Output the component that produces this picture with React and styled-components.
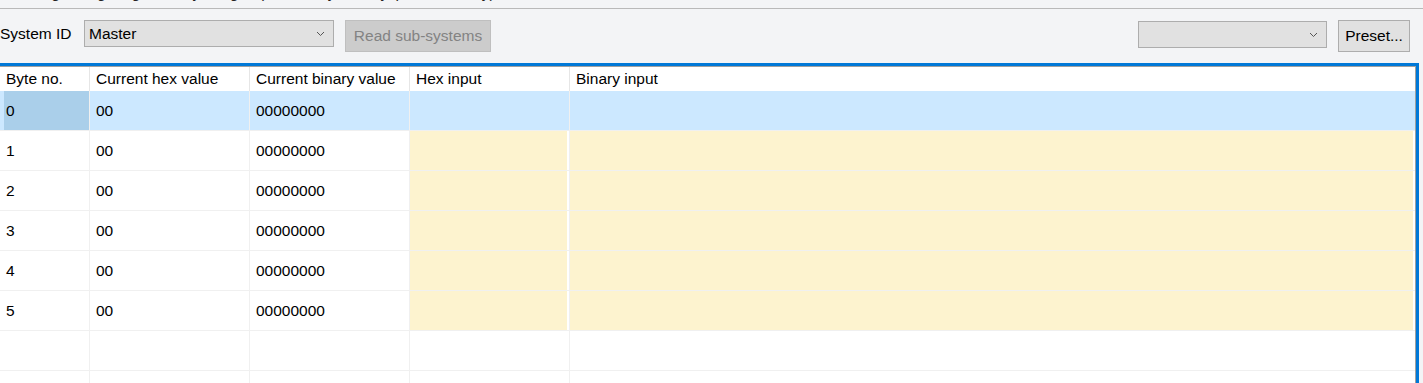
import React from "react";
import styled, { createGlobalStyle } from "styled-components";

const Global = createGlobalStyle`
  html, body { margin: 0; padding: 0; height: 383px; overflow: hidden; }
  body {
    background: #f3f4f6;
    font-family: "Liberation Sans", Arial, sans-serif;
    font-size: 15.5px;
    color: #000;
  }
`;

const Page = styled.div`
  display: flex;
  flex-direction: column;
  height: 383px;
`;

const TitleClip = styled.div`
  height: 8px;
  overflow: hidden;
  border-bottom: 1px solid #b9b9b9;
  padding-left: 12px;
`;

const TitleText = styled.div`
  margin-top: -16px;
  line-height: 17px;
  white-space: nowrap;
  color: #222;
`;

const Toolbar = styled.div`
  display: flex;
  align-items: flex-start;
  height: 54px;
  box-sizing: border-box;
  padding: 11px 13px 0 0;
`;

const Label = styled.span`
  width: 84px;
  line-height: 27px;
  white-space: nowrap;
`;

const SelectBox = styled.div`
  box-sizing: border-box;
  width: ${(p) => p.$w}px;
  height: 27px;
  margin-top: ${(p) => p.$top || 0}px;
  background: #e1e1e1;
  border: 1px solid #adadad;
  display: flex;
  align-items: center;
  padding: 0 8px 0 4px;
  line-height: 25px;
`;

const SelectValue = styled.span`
  flex: 1;
`;

const Button = styled.div`
  box-sizing: border-box;
  width: ${(p) => p.$w}px;
  height: 32px;
  margin-left: 11px;
  display: flex;
  align-items: center;
  justify-content: center;
  background: ${(p) => (p.$disabled ? "#cccccc" : "#e1e1e1")};
  border: 1px solid ${(p) => (p.$disabled ? "#bfbfbf" : "#adadad")};
  color: ${(p) => (p.$disabled ? "#838383" : "#000")};
  white-space: nowrap;
`;

const Spacer = styled.div`
  flex: 1;
`;

const Frame = styled.div`
  flex: 1;
  margin-right: 4px;
  border-top: 3px solid #0078d7;
  border-right: 3px solid #0078d7;
  overflow: hidden;
`;

const Grid = styled.div`
  background: #fff;
  border-top: 1px solid #a0a0a0;
  border-right: 1px solid #a0a0a0;
  height: 100%;
  display: grid;
  grid-template-columns: 90px 160px 160px 160px 1fr;
  grid-auto-rows: 40px;
  grid-template-rows: 24px;
`;

const HeadCell = styled.div`
  display: flex;
  align-items: center;
  padding-left: 6px;
  border-right: ${(p) => (p.$last ? "none" : "1px solid #e6e6e6")};
  white-space: nowrap;
`;

const Cell = styled.div`
  display: flex;
  align-items: center;
  padding-left: 6px;
  border-right: ${(p) => (p.$last ? "none" : "1px solid #f0f0f0")};
  border-bottom: 1px solid #f0f0f0;
  background: ${(p) =>
    p.$tone === "selHead"
      ? "#aacfea"
      : p.$tone === "sel"
      ? "#cce8ff"
      : p.$tone === "edit"
      ? "#fdf3cf"
      : "#fff"};
  box-shadow: ${(p) =>
    p.$tone === "selHead"
      ? "inset 4px 0 0 #cce8ff"
      : p.$tone === "edit"
      ? "inset -2px 0 0 #fff"
      : "none"};
`;

const Chevron = () => (
  <svg width="9" height="6" viewBox="0 0 9 6">
    <path d="M1 1 L4.5 4.5 L8 1" fill="none" stroke="#555" strokeWidth="1" />
  </svg>
);

const rows = [0, 1, 2, 3, 4, 5];

export default function App() {
  return (
    <Page>
      <Global />
      <TitleClip>
        <TitleText>
          Writing configuring memory images (Master, byte array, preset, binary)
        </TitleText>
      </TitleClip>
      <Toolbar>
        <Label>System ID</Label>
        <SelectBox $w={250}>
          <SelectValue>Master</SelectValue>
          <Chevron />
        </SelectBox>
        <Button $disabled $w={146}>Read sub-systems</Button>
        <Spacer />
        <SelectBox $w={189} $top={1}>
          <SelectValue />
          <Chevron />
        </SelectBox>
        <Button $w={72}>Preset...</Button>
      </Toolbar>
      <Frame>
        <Grid>
          <HeadCell>Byte no.</HeadCell>
          <HeadCell>Current hex value</HeadCell>
          <HeadCell>Current binary value</HeadCell>
          <HeadCell>Hex input</HeadCell>
          <HeadCell $last>Binary input</HeadCell>
          {rows.map((r) => {
            const sel = r === 0;
            return (
              <React.Fragment key={r}>
                <Cell $tone={sel ? "selHead" : undefined}>{r}</Cell>
                <Cell $tone={sel ? "sel" : undefined}>00</Cell>
                <Cell $tone={sel ? "sel" : undefined}>00000000</Cell>
                <Cell $tone={sel ? "sel" : "edit"} />
                <Cell $tone={sel ? "sel" : "edit"} $last />
              </React.Fragment>
            );
          })}
          {[0, 1].map((r) => (
            <React.Fragment key={"e" + r}>
              <Cell />
              <Cell />
              <Cell />
              <Cell />
              <Cell $last />
            </React.Fragment>
          ))}
        </Grid>
      </Frame>
    </Page>
  );
}
